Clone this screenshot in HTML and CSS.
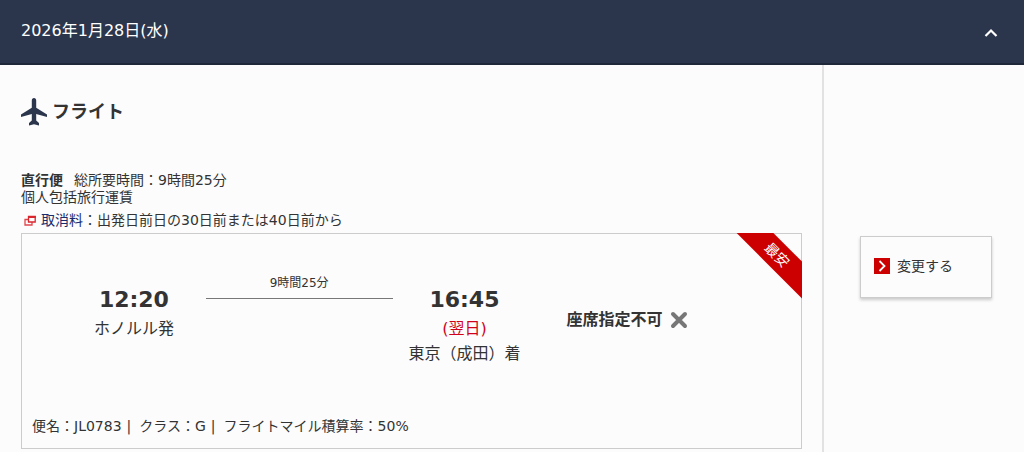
FILE: index.html
```html
<!DOCTYPE html>
<html lang="ja">
<head>
<meta charset="utf-8">
<meta name="viewport" content="width=device-width, initial-scale=1">
<title>フライト</title>
<link rel="stylesheet" href="styles.css">
</head>
<body>
<header class="day-header">
  <h1 class="day-title">2026年1月28日(水)</h1>
  <button type="button" class="toggle" aria-label="閉じる">
    <svg width="14" height="10" viewBox="0 0 14 10"><path d="M1.5 8 L7 2.500 L12.500 8" fill="none" stroke="#fff" stroke-width="2.2"/></svg>
  </button>
</header>

<div class="content">
  <main class="flight">
    <h2 class="flight-title">
      <svg width="26" height="28" viewBox="0 0 26 28"><path d="M13 0 C11.600 0 10.800 1 10.800 2.600 V9.800 L0 16.500 V19 L10.800 16 V22.500 L8 25 V27.500 L13 26.200 L18 27.500 V25 L15.200 22.500 V16 L26 19 V16.500 L15.200 9.800 V2.600 C15.200 1 14.400 0 13 0 Z" fill="#2b364d"/></svg>
      <span>フライト</span>
    </h2>

    <div class="summary">
      <p class="summary-line"><strong class="direct">直行便</strong>総所要時間：9時間25分</p>
      <p class="summary-line">個人包括旅行運賃</p>
      <p class="cancel">
        <svg width="12" height="11" viewBox="0 0 12 11"><path d="M1 4.500 H8 V10 H1 Z" fill="none" stroke="#e0474c" stroke-width="1.300"/><path d="M4.500 1.500 H11.200 V7 H4.500 Z" fill="#fcfcfc" stroke="#d9262c" stroke-width="1.300"/><path d="M4 1 H11.800 V3 H4 Z" fill="#d9262c"/></svg>
        <span><a href="#cancel">取消料</a>：出発日前日の30日前または40日前から</span>
      </p>
    </div>

    <section class="card">
      <div class="ribbon-box"><span class="ribbon">最安</span></div>
      <div class="route">
        <div class="stop">
          <p class="time">12:20</p>
          <p class="place">ホノルル発</p>
        </div>
        <p class="duration">9時間25分</p>
        <div class="stop">
          <p class="time">16:45</p>
          <p class="place next-day">(翌日)</p>
          <p class="place">東京（成田）着</p>
        </div>
        <p class="seat">
          <span>座席指定不可</span>
          <svg width="18" height="18" viewBox="0 0 18 18"><path d="M3 3 L15 15 M15 3 L3 15" fill="none" stroke="#777" stroke-width="4" stroke-linecap="round"/></svg>
        </p>
      </div>
      <ul class="details">
        <li>便名：JL0783</li>
        <li>クラス：G</li>
        <li>フライトマイル積算率：50%</li>
      </ul>
    </section>
  </main>

  <aside class="side">
    <button type="button" class="change">
      <svg width="16" height="16" viewBox="0 0 16 16"><path d="M0 0 H16 V16 H0 Z" fill="#c00"/><path d="M5.500 3 L10.500 8 L5.500 13" fill="none" stroke="#fff" stroke-width="1.800"/></svg>
      <span>変更する</span>
    </button>
  </aside>
</div>
</body>
</html>
```

FILE: styles.css
```css
* {
  box-sizing: border-box;
}

body {
  margin: 0;
  min-height: 100vh;
  display: flex;
  flex-direction: column;
  background: #fcfcfc;
  color: #333;
  font-family: "DejaVu Sans", "Noto Sans CJK JP", sans-serif;
  font-size: 14px;
}

h1, h2, p, ul {
  margin: 0;
  padding: 0;
}

svg {
  display: block;
  flex: none;
}

button {
  font: inherit;
  color: inherit;
  cursor: pointer;
}

.day-header {
  display: flex;
  justify-content: space-between;
  align-items: flex-start;
  height: 65px;
  padding: 19px 20px 0 21px;
  background: #2b364d;
  border-bottom: 2px solid #1f2839;
  color: #fff;
}

.day-title {
  font-size: 16px;
  line-height: 24px;
  font-weight: normal;
}

.toggle {
  margin-top: 3px;
  padding: 6px;
  border: 0;
  background: none;
}

.content {
  display: flex;
  flex: 1;
}

.flight {
  flex: 1;
  min-width: 0;
  padding: 31px 20px 3px 21px;
}

.flight-title {
  display: flex;
  align-items: center;
  gap: 5px;
  font-size: 18px;
  line-height: 32px;
}

.summary {
  padding-top: 44px;
}

.summary-line {
  line-height: 17px;
}

.direct {
  margin-right: 11px;
}

.cancel {
  display: flex;
  align-items: center;
  gap: 5px;
  padding: 3px 0 1px 3px;
  line-height: 23px;
}

.cancel a {
  color: #1a2a6c;
  text-decoration: none;
}

.card {
  position: relative;
  border: 1px solid #ccc;
}

.ribbon-box {
  position: absolute;
  top: -1px;
  right: -1px;
  width: 66px;
  height: 66px;
  overflow: hidden;
}

.ribbon {
  position: absolute;
  top: 9px;
  right: -31px;
  width: 112px;
  background: #c00;
  color: #fff;
  font-size: 14px;
  line-height: 26px;
  text-align: center;
  transform: rotate(45deg);
}

.route {
  display: grid;
  grid-template-columns: 124fr 187fr 124fr 265fr;
  column-gap: 10px;
  padding: 50px 0 0 50px;
}

.stop {
  text-align: center;
  white-space: nowrap;
}

.time {
  font-size: 22px;
  font-weight: bold;
  line-height: 32px;
}

.place {
  font-size: 16px;
  line-height: 25px;
}

.next-day {
  color: #d0021b;
}

.duration {
  align-self: start;
  margin-top: -10px;
  padding-bottom: 6px;
  border-bottom: 1px solid #777;
  font-size: 12px;
  line-height: 18px;
  text-align: center;
}

.seat {
  display: flex;
  align-self: start;
  align-items: center;
  gap: 8px;
  padding: 24px 0 0 30px;
  font-size: 16px;
  font-weight: bold;
  line-height: 24px;
}

.details {
  display: flex;
  padding: 50px 10px 12px;
  list-style: none;
  line-height: 20px;
}

.details li + li::before {
  content: "|";
  margin: 0 8px 0 5px;
}

.side {
  width: 202px;
  padding: 171px 32px 0 36px;
  border-left: 2px solid #e2e2e2;
}

.change {
  display: flex;
  align-items: center;
  gap: 7px;
  width: 100%;
  padding: 18px 13px 20px;
  background: #fcfcfc;
  border: 1px solid #ccc;
  box-shadow: 0 2px 3px rgba(0, 0, 0, 0.2);
  line-height: 22px;
}
```
